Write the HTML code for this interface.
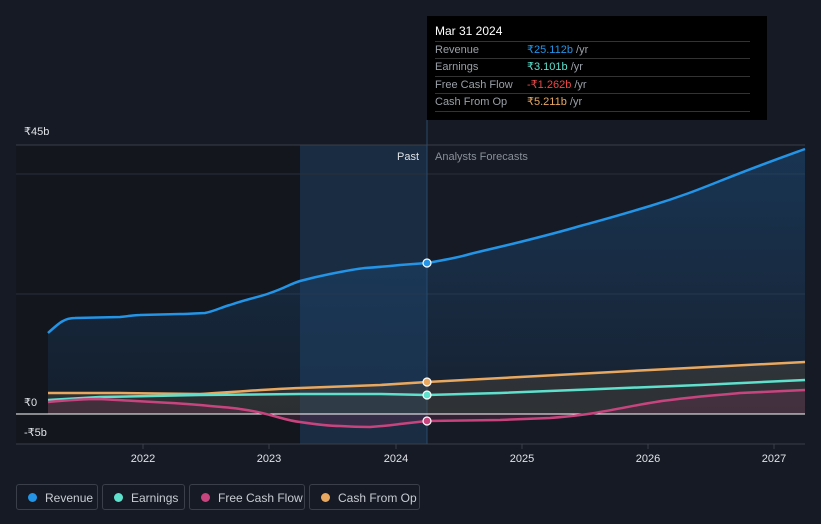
<!DOCTYPE html><html><head><style>
body{margin:0;background:#161a24;width:821px;height:524px;overflow:hidden;font-family:"Liberation Sans",sans-serif;position:relative}
.tt{position:absolute;left:427px;top:16px;width:340px;height:104px;background:#000;color:#9aa0a8;font-size:11px}
.tt .h{position:absolute;left:8px;top:8px;color:#fff;font-size:12px}
.row{position:absolute;left:8px;width:315px;height:17px;border-top:1px solid #333;line-height:17px}
.row span{position:absolute;left:92px}
.lg{position:absolute;top:484px;height:26px;border:1px solid #3a3f4a;border-radius:3px;color:#c8ccd2;font-size:12px;line-height:26px;box-sizing:border-box}
.lg i{position:absolute;left:11px;top:8px;width:9px;height:9px;border-radius:50%}
.lg b{font-weight:normal;position:absolute;left:28px}
</style></head><body>
<svg width="821" height="524" style="position:absolute;left:0;top:0">
<defs><linearGradient id="g" x1="0" y1="0" x2="0" y2="1"><stop offset="0" stop-color="#1b4a78" stop-opacity=".55"/><stop offset="1" stop-color="#1b4a78" stop-opacity=".15"/></linearGradient></defs>
<rect x="16" y="145" width="284" height="299" fill="#13161d"/>
<rect x="300" y="145" width="127" height="299" fill="#1a2c42"/>
<line x1="16" y1="145" x2="805" y2="145" stroke="#3a3f4a"/>
<line x1="16" y1="174" x2="805" y2="174" stroke="#2a2f3a"/>
<line x1="16" y1="294" x2="805" y2="294" stroke="#2a2f3a"/>
<line x1="16" y1="444" x2="805" y2="444" stroke="#3a3f4a"/>
<line x1="427" y1="120" x2="427" y2="444" stroke="#2b4a6a"/>
<path d="M48,333 C60,322 65,318 75,318 L120,317 C130,316 135,315 140,315 L180,314 C190,314 200,313 205,313 C215,311 222,307 230,305 C250,298 260,297 270,293 C285,288 290,284 300,281 C315,277 320,276 330,274 C345,271 355,269 365,268 C380,267 390,266 400,265 L427,263 C450,259 460,257 470,254 C490,249 500,247 520,242 C540,237 560,232 580,226 C610,218 630,212 650,206 C680,197 700,189 720,181 C760,165 780,158 805,149 L805,414 L48,414Z" fill="url(#g)"/>
<path d="M48,333 C60,322 65,318 75,318 L120,317 C130,316 135,315 140,315 L180,314 C190,314 200,313 205,313 C215,311 222,307 230,305 C250,298 260,297 270,293 C285,288 290,284 300,281 C315,277 320,276 330,274 C345,271 355,269 365,268 C380,267 390,266 400,265 L427,263 C450,259 460,257 470,254 C490,249 500,247 520,242 C540,237 560,232 580,226 C610,218 630,212 650,206 C680,197 700,189 720,181 C760,165 780,158 805,149" fill="none" stroke="#2394e6" stroke-width="2.5"/>
<path d="M48,393 L120,393 L200,394 C250,391 270,389 300,388 L380,385 L427,382 L520,377 L650,370 L805,362 L805,414 L48,414Z" fill="#5a5040" opacity=".35"/>
<path d="M48,402 C70,400 90,399 100,399 C150,402 180,403 200,405 C220,407 235,408 240,409 C255,411 262,413 270,415 C285,419 290,421 300,422 C320,425 330,426 340,426 C355,427 365,427 370,427 C385,426 392,425 400,424 L427,421 L500,420 L550,418 C575,416 590,414 600,412 C630,407 650,402 670,400 C700,396 720,395 740,393 L805,390 L805,414 L48,414Z" fill="#6a3050" opacity=".35"/>
<line x1="16" y1="414" x2="805" y2="414" stroke="#fff" stroke-width="1"/>
<path d="M48,393 L120,393 L200,394 C250,391 270,389 300,388 L380,385 L427,382 L520,377 L650,370 L805,362" fill="none" stroke="#e8a860" stroke-width="2.5"/>
<path d="M48,400 L100,397 L200,395 L300,394 L380,394 L427,395 L500,393 L600,389 L700,385 L805,380" fill="none" stroke="#5fe0cd" stroke-width="2.5"/>
<path d="M48,402 C70,400 90,399 100,399 C150,402 180,403 200,405 C220,407 235,408 240,409 C255,411 262,413 270,415 C285,419 290,421 300,422 C320,425 330,426 340,426 C355,427 365,427 370,427 C385,426 392,425 400,424 L427,421 L500,420 L550,418 C575,416 590,414 600,412 C630,407 650,402 670,400 C700,396 720,395 740,393 L805,390" fill="none" stroke="#c8447e" stroke-width="2.5"/>
<g stroke="#fff" stroke-width="1.2"><circle cx="427" cy="263" r="4" fill="#2394e6"/><circle cx="427" cy="382" r="4" fill="#e8a860"/><circle cx="427" cy="395" r="4" fill="#5fe0cd"/><circle cx="427" cy="421" r="4" fill="#c8447e"/></g>
<g stroke="#3a3f4a"><line x1="143" y1="444" x2="143" y2="449"/><line x1="269" y1="444" x2="269" y2="449"/><line x1="396" y1="444" x2="396" y2="449"/><line x1="522" y1="444" x2="522" y2="449"/><line x1="648" y1="444" x2="648" y2="449"/><line x1="774" y1="444" x2="774" y2="449"/></g>
<g fill="#e0e3e8" font-size="11" font-family="Liberation Sans,sans-serif">
<text x="24" y="135">₹45b</text><text x="24" y="406">₹0</text><text x="24" y="436">-₹5b</text>
<g text-anchor="middle"><text x="143" y="462">2022</text><text x="269" y="462">2023</text><text x="396" y="462">2024</text><text x="522" y="462">2025</text><text x="648" y="462">2026</text><text x="774" y="462">2027</text></g>
<text x="419" y="160" text-anchor="end">Past</text><text x="435" y="160" fill="#8a9099">Analysts Forecasts</text>
</g></svg>
<div class="tt"><div class="h">Mar 31 2024</div>
<div class="row" style="top:25px">Revenue<span><font color="#2394e6">₹25.112b</font> /yr</span></div>
<div class="row" style="top:42px">Earnings<span><font color="#5fe0cd">₹3.101b</font> /yr</span></div>
<div class="row" style="top:60px">Free Cash Flow<span><font color="#e84a4a">-₹1.262b</font> /yr</span></div>
<div class="row" style="top:77px;border-bottom:1px solid #333">Cash From Op<span><font color="#e8a860">₹5.211b</font> /yr</span></div>
</div>
<div class="lg" style="left:16px;width:82px"><i style="background:#2394e6"></i><b>Revenue</b></div>
<div class="lg" style="left:102px;width:83px"><i style="background:#5fe0cd"></i><b>Earnings</b></div>
<div class="lg" style="left:189px;width:116px"><i style="background:#c8447e"></i><b>Free Cash Flow</b></div>
<div class="lg" style="left:309px;width:111px"><i style="background:#e8a860"></i><b>Cash From Op</b></div>
</body></html>
